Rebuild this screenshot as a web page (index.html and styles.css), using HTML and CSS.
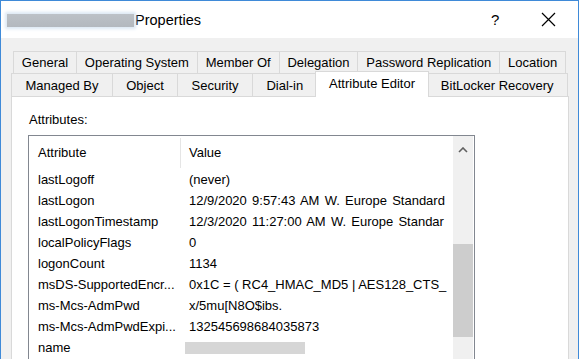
FILE: index.html
```html
<!DOCTYPE html>
<html>
    <head>
        <title> Properties </title>
        <meta charset="utf-8"/>
        <link rel="stylesheet" href="styles.css">
    </head>
    <body>
        <div class="window">

            <header class="titlebar">
                <span class="hidden-name"></span>
                <span class="title">Properties</span>
                <span class="help">?</span>
                <span class="close">
                    <svg width="15" height="15" viewBox="0 0 15 15">
                        <path d="M1 1 L14 14 M14 1 L1 14" stroke="#000" stroke-width="1.2" fill="none"/>
                    </svg>
                </span>
            </header>

            <main class="client">

                <section class="tabs">
                    <div class="tab-row back">
                        <div class="tab">General</div>
                        <div class="tab">Operating System</div>
                        <div class="tab">Member Of</div>
                        <div class="tab">Delegation</div>
                        <div class="tab">Password Replication</div>
                        <div class="tab">Location</div>
                    </div>
                    <div class="tab-row front">
                        <div class="tab">Managed By</div>
                        <div class="tab">Object</div>
                        <div class="tab">Security</div>
                        <div class="tab">Dial-in</div>
                        <div class="tab selected">Attribute Editor</div>
                        <div class="tab">BitLocker Recovery</div>
                    </div>
                </section>

                <section class="panel">
                    <label class="label">Attributes:</label>
                    <div class="listbox">
                        <div class="list">
                            <div class="row head">
                                <span class="attr">Attribute</span>
                                <span class="value">Value</span>
                            </div>
                            <div class="row"><span class="attr">lastLogoff</span><span class="value">(never)</span></div>
                            <div class="row"><span class="attr">lastLogon</span><span class="value date">12/9/2020 9:57:43 AM W. Europe Standard</span></div>
                            <div class="row"><span class="attr">lastLogonTimestamp</span><span class="value date">12/3/2020 11:27:00 AM W. Europe Standar</span></div>
                            <div class="row"><span class="attr">localPolicyFlags</span><span class="value">0</span></div>
                            <div class="row"><span class="attr">logonCount</span><span class="value">1134</span></div>
                            <div class="row"><span class="attr">msDS-SupportedEncr...</span><span class="value">0x1C = ( RC4_HMAC_MD5 | AES128_CTS_</span></div>
                            <div class="row"><span class="attr">ms-Mcs-AdmPwd</span><span class="value">x/5mu[N8O$ibs.</span></div>
                            <div class="row"><span class="attr">ms-Mcs-AdmPwdExpi...</span><span class="value">132545698684035873</span></div>
                            <div class="row"><span class="attr">name</span><span class="value"><span class="hidden-value"></span></span></div>
                        </div>
                        <div class="scrollbar">
                            <div class="arrow">
                                <svg width="10" height="6" viewBox="0 0 10 6">
                                    <path d="M1 5 L5 1 L9 5" stroke="#606060" stroke-width="1.6" fill="none"/>
                                </svg>
                            </div>
                            <div class="thumb"></div>
                        </div>
                    </div>
                </section>

            </main>

        </div>
    </body>
</html>
```

FILE: styles.css
```css
* {
    margin: 0;
    padding: 0;
    box-sizing: border-box;
}

body {
    font-family: 'Liberation Sans', Arial, sans-serif;
    font-size: 13px;
    color: #000;
    background: #f0f0f0;
}

.window {
    width: 579px;
    height: 359px;
    overflow: hidden;

    border: 1px solid #3f8ad8;
    border-bottom: none;
    background: #f0f0f0;

    display: flex;
    flex-direction: column;
}

/* title bar */

.titlebar {
    height: 37px;
    flex: none;
    padding-left: 6px;

    background: #fff;

    display: flex;
    align-items: center;
}

.hidden-name {
    width: 127px;
    height: 13px;
    margin-top: 1px;

    background: linear-gradient(#bcc1c7, #b3b8be);
    box-shadow: 0 0 3px 2px #dbe7f4;
    filter: blur(0.6px);
}

.title {
    margin-left: 1px;
    font-size: 14.5px;
    flex: 1;
}

.help {
    width: 50px;
    font-size: 15px;
}

.close {
    width: 37px;
    height: 15px;
}

/* tabs */

.client {
    flex: 1;
    padding: 13px 10px 0 10px;

    display: flex;
    flex-direction: column;
}

.tab-row {
    display: flex;
}

.tab-row.back {
    margin: 0 2px 0 2px;
    height: 22px;
}

.tab-row.front {
    height: 23px;
}

.tab {
    flex: 1 1 auto;
    padding: 0 5px;
    margin-left: -1px;

    border: 1px solid #d9d9d9;
    border-bottom: none;
    background: #f0f0f0;

    display: flex;
    justify-content: center;
    align-items: center;
    white-space: nowrap;
}

.tab:first-child {
    margin-left: 0;
}

.tab.selected {
    position: relative;
    z-index: 1;
    margin: -2px -2px -1px -3px;
    padding-bottom: 3px;

    background: #fff;
}

/* panel */

.panel {
    flex: 1;
    margin-right: -1px;
    padding: 15px 0 0 16px;

    border: 1px solid #d9d9d9;
    border-bottom: none;
    background: #fff;
}

.label {
    display: block;
    height: 23px;
    padding-left: 1px;
}

.listbox {
    width: 447px;
    height: 240px;

    border: 1px solid #828790;
    border-bottom: none;

    display: flex;
}

.list {
    flex: 1;
    min-width: 0;
}

.row {
    height: 21px;

    display: flex;
    align-items: center;
    white-space: nowrap;
}

.row.head {
    height: 33px;
}

.row .attr {
    width: 151px;
    flex: none;
    padding-left: 9px;
    overflow: hidden;
}

.row .value {
    flex: 1;
    padding-left: 9px;
    overflow: hidden;
}

.row .value.date {
    word-spacing: 1.6px;
}

.row.head .value {
    height: 30px;
    line-height: 30px;
    border-left: 1px solid #e5e5e5;
    padding-left: 8px;
}

.hidden-value {
    display: block;
    width: 120px;
    height: 12px;
    margin-left: -4px;

    background: #d6d6d6;
    filter: blur(0.5px);
}

/* scrollbar */

.scrollbar {
    width: 20px;
    flex: none;
    margin-right: 1px;

    background: #f0f0f0;

    display: flex;
    flex-direction: column;
}

.scrollbar .arrow {
    height: 20px;
    padding-top: 11px;

    display: flex;
    justify-content: center;
}

.scrollbar .thumb {
    height: 93px;
    margin-top: 88px;

    background: #cdcdcd;
}
```
